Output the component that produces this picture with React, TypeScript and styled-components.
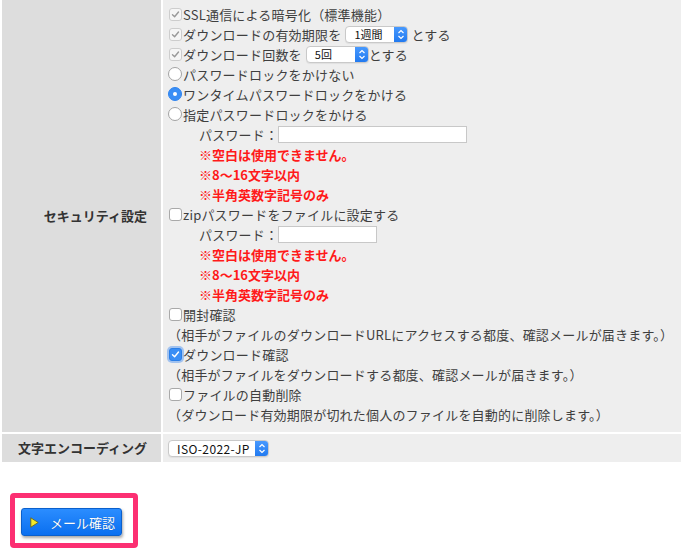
import React from 'react';
import styled, { createGlobalStyle, css } from 'styled-components';

const GlobalStyle = createGlobalStyle`
	html, body {
		margin: 0;
		padding: 0;
		background: #ffffff;
	}
	body {
		font-family: "Noto Sans CJK JP", "Noto Sans", sans-serif;
		font-size: 13px;
		color: #3f3f3f;
	}
`;

const Table = styled.div`
	display: grid;
	grid-template-columns: 159px 1fr;
	gap: 2px;
	padding-left: 2px;
`;

const Label = styled.div`
	background: #dddddd;
	display: flex;
	align-items: center;
	justify-content: flex-end;
	padding-right: 14px;
	font-weight: bold;
	color: #333;
	line-height: 20px;
`;

const Cell = styled.div< { $compact?: boolean } >`
	background: #eeeeee;
	padding: ${ ( p ) => ( p.$compact ? '0 5px' : '4px 5px 8px' ) };
	min-height: ${ ( p ) => ( p.$compact ? '28px' : 'auto' ) };
	display: flex;
	flex-direction: column;
	justify-content: center;
`;

const Line = styled.div< { $indent?: boolean; $warn?: boolean } >`
	height: 20px;
	display: flex;
	align-items: center;
	white-space: nowrap;
	letter-spacing: 0.2px;
	padding-left: ${ ( p ) => ( p.$indent ? '31px' : '0' ) };
	${ ( p ) =>
		p.$warn &&
		css`
			color: #ff1a1a;
			font-weight: bold;
			letter-spacing: 0;
		` }
`;

const Box = styled.span< { $on?: boolean; $off?: boolean } >`
	width: 11px;
	height: 11px;
	margin: 0 1px 0 1px;
	border: 1px solid #a9a9a9;
	border-radius: 3px;
	background: #fff;
	display: inline-flex;
	align-items: center;
	justify-content: center;
	flex: none;
	${ ( p ) =>
		p.$off &&
		css`
			border-color: #cdcdcd;
			background: #f6f6f6;
		` }
	${ ( p ) =>
		p.$on &&
		css`
			border-color: #2b7fe8;
			background: #3a8ef5;
			box-shadow: 0 0 0 2px rgba( 110, 165, 240, 0.6 );
		` }
`;

const Round = styled.span< { $on?: boolean } >`
	width: 12px;
	height: 12px;
	margin-right: 1px;
	border-radius: 50%;
	border: 1px solid #a3a3a3;
	background: #fff;
	display: inline-flex;
	align-items: center;
	justify-content: center;
	flex: none;
	${ ( p ) =>
		p.$on &&
		css`
			border-color: #2f84ef;
			background: #3a8ef5;
			&::after {
				content: '';
				width: 4px;
				height: 4px;
				border-radius: 50%;
				background: #fff;
			}
		` }
`;

const Check = ( { on, off }: { on?: boolean; off?: boolean } ) => (
	<Box $on={ on } $off={ off }>
		{ ( on || off ) && (
			<svg width="9" height="9" viewBox="0 0 9 9">
				<path
					d="M1.5 4.8 L3.6 6.8 L7.5 2"
					fill="none"
					stroke={ on ? '#fff' : '#9a9a9a' }
					strokeWidth="1.4"
					strokeLinecap="round"
					strokeLinejoin="round"
				/>
			</svg>
		) }
	</Box>
);

const SelectWrap = styled.span< { $w: number } >`
	width: ${ ( p ) => p.$w }px;
	height: 17px;
	box-sizing: border-box;
	border: 1px solid #c9c9c9;
	border-radius: 4px;
	background: #fff;
	display: inline-flex;
	align-items: center;
	justify-content: space-between;
	overflow: hidden;
	flex: none;
	letter-spacing: 0;
	box-shadow: 0 1px 1px rgba( 0, 0, 0, 0.06 );
`;

const SelectText = styled.span< { $big?: boolean } >`
	font-size: ${ ( p ) => ( p.$big ? '12px' : '11px' ) };
	letter-spacing: ${ ( p ) => ( p.$big ? '0.4px' : '0' ) };
	color: #111;
	padding-left: 8px;
	font-family: "Noto Sans CJK JP", "Liberation Sans", sans-serif;
`;

const Arrow = styled.span`
	width: 14px;
	height: 17px;
	margin-right: -1px;
	background: linear-gradient( #4a9bff, #1f78ef );
	display: flex;
	align-items: center;
	justify-content: center;
`;

const Select = ( {
	value,
	width,
	big,
}: {
	value: string;
	width: number;
	big?: boolean;
} ) => (
	<SelectWrap $w={ width }>
		<SelectText $big={ big }>{ value }</SelectText>
		<Arrow>
			<svg width="8" height="11" viewBox="0 0 8 11">
				<path
					d="M1.5 4 L4 1.6 L6.5 4 M1.5 7 L4 9.4 L6.5 7"
					fill="none"
					stroke="#fff"
					strokeWidth="1.2"
				/>
			</svg>
		</Arrow>
	</SelectWrap>
);

const TextBox = styled.span< { $w: number } >`
	width: ${ ( p ) => p.$w }px;
	height: 17px;
	box-sizing: border-box;
	border: 1px solid #c8c8c8;
	background: #fff;
	flex: none;
`;

const Gap = styled.span`
	width: 4px;
`;

const Footer = styled.div`
	margin: 31px 0 0 10px;
	width: 128px;
	box-sizing: border-box;
	border: 5px solid #fc2f72;
	border-radius: 4px;
	padding: 10px 11px 7px 6px;
	background: #fff;
`;

const Button = styled.button`
	width: 101px;
	height: 28px;
	border: 1px solid #0b60cc;
	border-radius: 3px;
	background: linear-gradient( #2b8dff, #0a6ff0 );
	box-shadow: 1px 2px 3px rgba( 0, 0, 0, 0.35 );
	color: #fff;
	font-family: "Noto Sans CJK JP", sans-serif;
	font-size: 13px;
	display: flex;
	align-items: center;
	padding: 0 0 0 8px;
	gap: 11px;
	text-shadow: 0 0 1px rgba( 0, 0, 0, 0.3 );
`;

const Warnings = () => (
	<>
		<Line $indent $warn>
			※空白は使用できません。
		</Line>
		<Line $indent $warn>
			※8〜16文字以内
		</Line>
		<Line $indent $warn>
			※半角英数字記号のみ
		</Line>
	</>
);

export default function App() {
	return (
		<>
			<GlobalStyle />
			<Table>
				<Label>セキュリティ設定</Label>
				<Cell>
					<Line>
						<Check off />
						SSL通信による暗号化（標準機能）
					</Line>
					<Line>
						<Check off />
						ダウンロードの有効期限を
						<Gap />
						<Select value="1週間" width={ 63 } />
						&nbsp;とする
					</Line>
					<Line>
						<Check off />
						ダウンロード回数を
						<Gap />
						<Select value="5回" width={ 63 } />
						とする
					</Line>
					<Line>
						<Round />
						パスワードロックをかけない
					</Line>
					<Line>
						<Round $on />
						ワンタイムパスワードロックをかける
					</Line>
					<Line>
						<Round />
						指定パスワードロックをかける
					</Line>
					<Line $indent>
						パスワード：
						<TextBox $w={ 189 } />
					</Line>
					<Warnings />
					<Line>
						<Check />
						zipパスワードをファイルに設定する
					</Line>
					<Line $indent>
						パスワード：
						<TextBox $w={ 99 } />
					</Line>
					<Warnings />
					<Line>
						<Check />
						開封確認
					</Line>
					<Line>
						（相手がファイルのダウンロードURLにアクセスする都度、確認メールが届きます。）
					</Line>
					<Line>
						<Check on />
						ダウンロード確認
					</Line>
					<Line>
						（相手がファイルをダウンロードする都度、確認メールが届きます。）
					</Line>
					<Line>
						<Check />
						ファイルの自動削除
					</Line>
					<Line>
						（ダウンロード有効期限が切れた個人のファイルを自動的に削除します。）
					</Line>
				</Cell>
				<Label>文字エンコーディング</Label>
				<Cell $compact>
					<Line>
						<Select value="ISO-2022-JP" width={ 101 } big />
					</Line>
				</Cell>
			</Table>
			<Footer>
				<Button type="button">
					<svg width="9" height="11" viewBox="0 0 9 11">
						<path
							d="M0.8 0.8 L8.2 5.5 L0.8 10.2 Z"
							fill="#f4ea2a"
							stroke="#6b6520"
							strokeWidth="0.9"
							strokeLinejoin="round"
						/>
					</svg>
					メール確認
				</Button>
			</Footer>
		</>
	);
}
